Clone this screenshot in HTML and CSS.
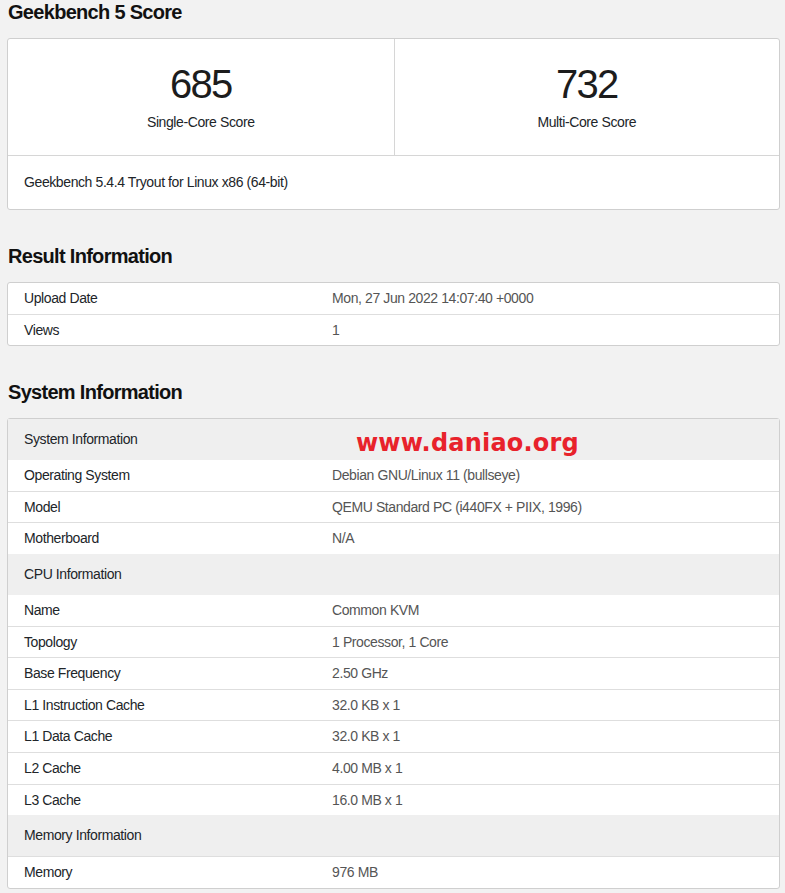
FILE: index.html
```html
<!DOCTYPE html>
<html lang="en">
<head>
    <meta charset="UTF-8">
    <meta name="viewport" content="width=device-width, initial-scale=1.0">
    <title>Geekbench 5 Score</title>
    <link rel="stylesheet" href="styles.css">
</head>
<body>
    <div class="page">
        <h2>Geekbench 5 Score</h2>
        <div class="card">
            <div class="scores">
                <div class="score">
                    <div class="score-value">685</div>
                    <div class="score-name">Single-Core Score</div>
                </div>
                <div class="score">
                    <div class="score-value">732</div>
                    <div class="score-name">Multi-Core Score</div>
                </div>
            </div>
            <div class="card-footer">Geekbench 5.4.4 Tryout for Linux x86 (64-bit)</div>
        </div>

        <h2>Result Information</h2>
        <div class="card">
            <div class="row"><div class="name">Upload Date</div><div class="value">Mon, 27 Jun 2022 14:07:40 +0000</div></div>
            <div class="row last"><div class="name">Views</div><div class="value">1</div></div>
        </div>

        <h2>System Information</h2>
        <div class="card system">
            <div class="row head">System Information</div>
            <div class="row"><div class="name">Operating System</div><div class="value">Debian GNU/Linux 11 (bullseye)</div></div>
            <div class="row"><div class="name">Model</div><div class="value">QEMU Standard PC (i440FX + PIIX, 1996)</div></div>
            <div class="row last"><div class="name">Motherboard</div><div class="value">N/A</div></div>

            <div class="row head">CPU Information</div>
            <div class="row"><div class="name">Name</div><div class="value">Common KVM</div></div>
            <div class="row"><div class="name">Topology</div><div class="value">1 Processor, 1 Core</div></div>
            <div class="row"><div class="name">Base Frequency</div><div class="value">2.50 GHz</div></div>
            <div class="row"><div class="name">L1 Instruction Cache</div><div class="value">32.0 KB x 1</div></div>
            <div class="row"><div class="name">L1 Data Cache</div><div class="value">32.0 KB x 1</div></div>
            <div class="row"><div class="name">L2 Cache</div><div class="value">4.00 MB x 1</div></div>
            <div class="row last"><div class="name">L3 Cache</div><div class="value">16.0 MB x 1</div></div>

            <div class="row head line">Memory Information</div>
            <div class="row last"><div class="name">Memory</div><div class="value">976 MB</div></div>

            <!-- 水印 -->
            <div class="watermark">www.daniao.org</div>
        </div>
    </div>
</body>
</html>
```

FILE: styles.css
```css
body {
    margin: 0;
    background-color: #f2f2f2;
    font-family: "Liberation Sans", Arial, sans-serif;
    font-size: 14px;
    color: #212529;
    letter-spacing: -0.4px;
}

.page {
    padding: 0 5px 0 7px;
}

h2 {
    margin: 0 1px 14px;
    font-size: 20px;
    line-height: 24px;
    font-weight: bold;
    letter-spacing: -0.7px;
    color: #111;
}

.card + h2 {
    margin-top: 34px;
}

.card {
    background-color: #fff;
    border: 1px solid #cfcfcf;
    border-radius: 3px;
    position: relative;
}

.scores {
    display: grid;
    grid-template-columns: 1fr 1fr;
    border-bottom: 1px solid #d6d6d6;
}

.score {
    text-align: center;
    padding: 21px 0 23px;
}

.score + .score {
    border-left: 1px solid #d6d6d6;
}

.score-value {
    font-size: 40px;
    line-height: 48px;
    letter-spacing: -1.8px;
    color: #1c1c1c;
}

.score-name {
    margin-top: 4px;
    line-height: 20px;
}

.card-footer {
    padding: 16px 16px;
    line-height: 21px;
}

.row {
    display: grid;
    grid-template-columns: 308px 1fr;
    padding: 5px 16px;
    line-height: 20.6px;
    border-bottom: 1px solid #dedede;
}

.row.last {
    border-bottom: none;
}

.row.head {
    display: block;
    padding: 10px 16px;
    line-height: 21px;
    background-color: #efefef;
    border-bottom: none;
}

.row.head.line {
    border-bottom: 1px solid #dedede;
}

.value {
    color: #555;
}

.watermark {
    position: absolute;
    left: 348px;
    top: 10px;
    font-family: "DejaVu Sans", sans-serif;
    font-weight: bold;
    font-size: 24px;
    line-height: 28px;
    letter-spacing: 0.2px;
    color: #e8222b;
}
```
